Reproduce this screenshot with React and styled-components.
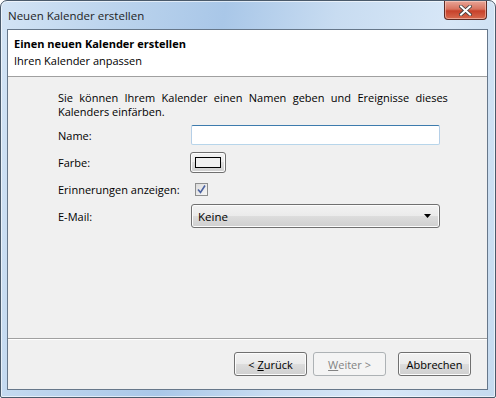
import React from "react";
import styled, { createGlobalStyle } from "styled-components";

const GlobalStyle = createGlobalStyle`
  html, body { margin: 0; padding: 0; background: #ffffff; }
  body {
    font-family: "Segoe UI", "Open Sans", "Noto Sans", sans-serif;
    font-size: 11px;
    color: #000000;
  }
`;

const Frame = styled.div`
  box-sizing: border-box;
  width: 496px;
  height: 398px;
  display: flex;
  flex-direction: column;
  padding: 0 7px 7px 6px;
  border: 1px solid #4a5a6b;
  border-radius: 7px 7px 2px 2px;
  background: linear-gradient(100deg, #d3e4f5 0%, #bcd4ed 20%, #a9c7e8 40%, #c8dcf1 60%, #d7e7f7 80%, #c5daef 100%);
  box-shadow: inset 0 0 0 1px rgba(255, 255, 255, 0.6);
`;

const TitleBar = styled.div`
  height: 28px;
  flex: none;
  display: flex;
  align-items: flex-start;
  justify-content: space-between;
`;

const Caption = styled.span`
  padding: 7px 0 0 1px;
  color: #1e1e1e;
  font-size: 11.5px;
`;

const CloseButton = styled.div`
  width: 43px;
  height: 19px;
  margin-right: 1px;
  box-sizing: border-box;
  border: 1px solid #5d2b25;
  border-top: none;
  border-radius: 0 0 4px 4px;
  background: linear-gradient(#e8a597 0%, #d8735f 45%, #c7412a 55%, #d76a4f 100%);
  box-shadow: inset 0 0 0 1px rgba(255, 220, 210, 0.5);
  display: flex;
  align-items: center;
  justify-content: center;
`;

const Client = styled.div`
  flex: 1;
  display: flex;
  flex-direction: column;
  background: #f0f0f0;
  border: 1px solid #66778a;
`;

const Header = styled.div`
  height: 47px;
  flex: none;
  box-sizing: border-box;
  background: #ffffff;
  border-bottom: 1px solid #a0a0a0;
  padding: 5px 6px 0 6px;
`;

const HeaderTitle = styled.div`
  font-weight: bold;
  line-height: 17px;
`;

const HeaderSub = styled.div`
  line-height: 18px;
`;

const Content = styled.div`
  flex: 1;
  padding: 14px 0 0 50px;
`;

const Intro = styled.p`
  margin: 0 0 3px 0;
  line-height: 14px;
  white-space: nowrap;
`;

const IntroLine = styled.span`
  word-spacing: ${(p) => p.$spacing || 0}px;
`;

const Form = styled.div`
  display: grid;
  grid-template-columns: 133px 249px;
  grid-auto-rows: 26px;
  align-items: center;
  row-gap: 1px;
`;

const Label = styled.span`
  line-height: 15px;
`;

const TextInput = styled.div`
  height: 20px;
  box-sizing: border-box;
  background: #ffffff;
  border: 1px solid #abadb3;
  border-top-color: #3d7bad;
  border-left-color: #b5cfe7;
  border-right-color: #b5cfe7;
  border-bottom-color: #b7d5ea;
  border-radius: 2px;
`;

const AeroButton = styled.div`
  box-sizing: border-box;
  display: flex;
  align-items: center;
  justify-content: ${(p) => (p.$left ? "space-between" : "center")};
  border: 1px solid ${(p) => (p.$disabled ? "#adb2b5" : "#707070")};
  border-radius: 3px;
  color: ${(p) => (p.$disabled ? "#838383" : "#000000")};
  background: ${(p) =>
    p.$disabled
      ? "#f4f4f4"
      : "linear-gradient(#f2f2f2 0%, #ebebeb 49%, #dddddd 50%, #cfcfcf 100%)"};
  box-shadow: inset 0 0 0 1px ${(p) => (p.$disabled ? "#f4f4f4" : "#fcfcfc")};
`;

const ColorButton = styled(AeroButton)`
  width: 36px;
  height: 21px;
  margin-left: -1px;
`;

const Swatch = styled.div`
  width: 24px;
  height: 9px;
  border: 1px solid #000000;
  background: #f0f0f0;
`;

const Check = styled.div`
  width: 13px;
  height: 13px;
  margin-left: 4px;
  box-sizing: border-box;
  border: 1px solid #8e8f8f;
  background: linear-gradient(135deg, #dcdcdc, #f6f6f6);
  display: flex;
  align-items: center;
  justify-content: center;
`;

const Select = styled(AeroButton)`
  height: 24px;
  padding: 0 8px 0 6px;
  font-size: 11.5px;
`;

const Footer = styled.div`
  height: 51px;
  flex: none;
  box-sizing: border-box;
  border-top: 1px solid #a0a0a0;
  box-shadow: inset 0 1px 0 #ffffff;
  display: flex;
  justify-content: flex-end;
  align-items: flex-start;
  padding: 13px 16px 0 0;
  gap: 6px;
`;

const WizardButton = styled(AeroButton)`
  width: 73px;
  height: 24px;
  margin-left: ${(p) => p.$gap || 0}px;
`;

const Mnemonic = styled.span`
  text-decoration: underline;
`;

export default function App() {
  return (
    <>
      <GlobalStyle />
      <Frame>
        <TitleBar>
          <Caption>Neuen Kalender erstellen</Caption>
          <CloseButton>
            <svg width="13" height="11" viewBox="0 0 13 11">
              <path d="M2 1.5 L11 9.5 M11 1.5 L2 9.5" stroke="#3a3a3a" strokeWidth="3.6" strokeLinecap="square" />
              <path d="M2 1.5 L11 9.5 M11 1.5 L2 9.5" stroke="#ffffff" strokeWidth="2" strokeLinecap="square" />
            </svg>
          </CloseButton>
        </TitleBar>
        <Client>
          <Header>
            <HeaderTitle>Einen neuen Kalender erstellen</HeaderTitle>
            <HeaderSub>Ihren Kalender anpassen</HeaderSub>
          </Header>
          <Content>
            <Intro>
              <IntroLine $spacing={3.5}>
                Sie können Ihrem Kalender einen Namen geben und Ereignisse dieses
              </IntroLine>
              <br />
              <IntroLine>Kalenders einfärben.</IntroLine>
            </Intro>
            <Form>
              <Label>Name:</Label>
              <TextInput />
              <Label>Farbe:</Label>
              <ColorButton>
                <Swatch />
              </ColorButton>
              <Label>Erinnerungen anzeigen:</Label>
              <Check>
                <svg width="9" height="9" viewBox="0 0 9 9">
                  <path d="M1 4.5 L3.5 7.5 L8 0.5" fill="none" stroke="#4b62a0" strokeWidth="1.6" />
                </svg>
              </Check>
              <Label>E-Mail:</Label>
              <Select $left>
                <span>Keine</span>
                <svg width="7" height="4" viewBox="0 0 7 4">
                  <path d="M0 0 H7 L3.5 4 Z" fill="#000000" />
                </svg>
              </Select>
            </Form>
          </Content>
          <Footer>
            <WizardButton>
              &lt;&nbsp;<Mnemonic>Z</Mnemonic>urück
            </WizardButton>
            <WizardButton $disabled>
              <Mnemonic>W</Mnemonic>eiter &gt;
            </WizardButton>
            <WizardButton $gap={6}>Abbrechen</WizardButton>
          </Footer>
        </Client>
      </Frame>
    </>
  );
}
